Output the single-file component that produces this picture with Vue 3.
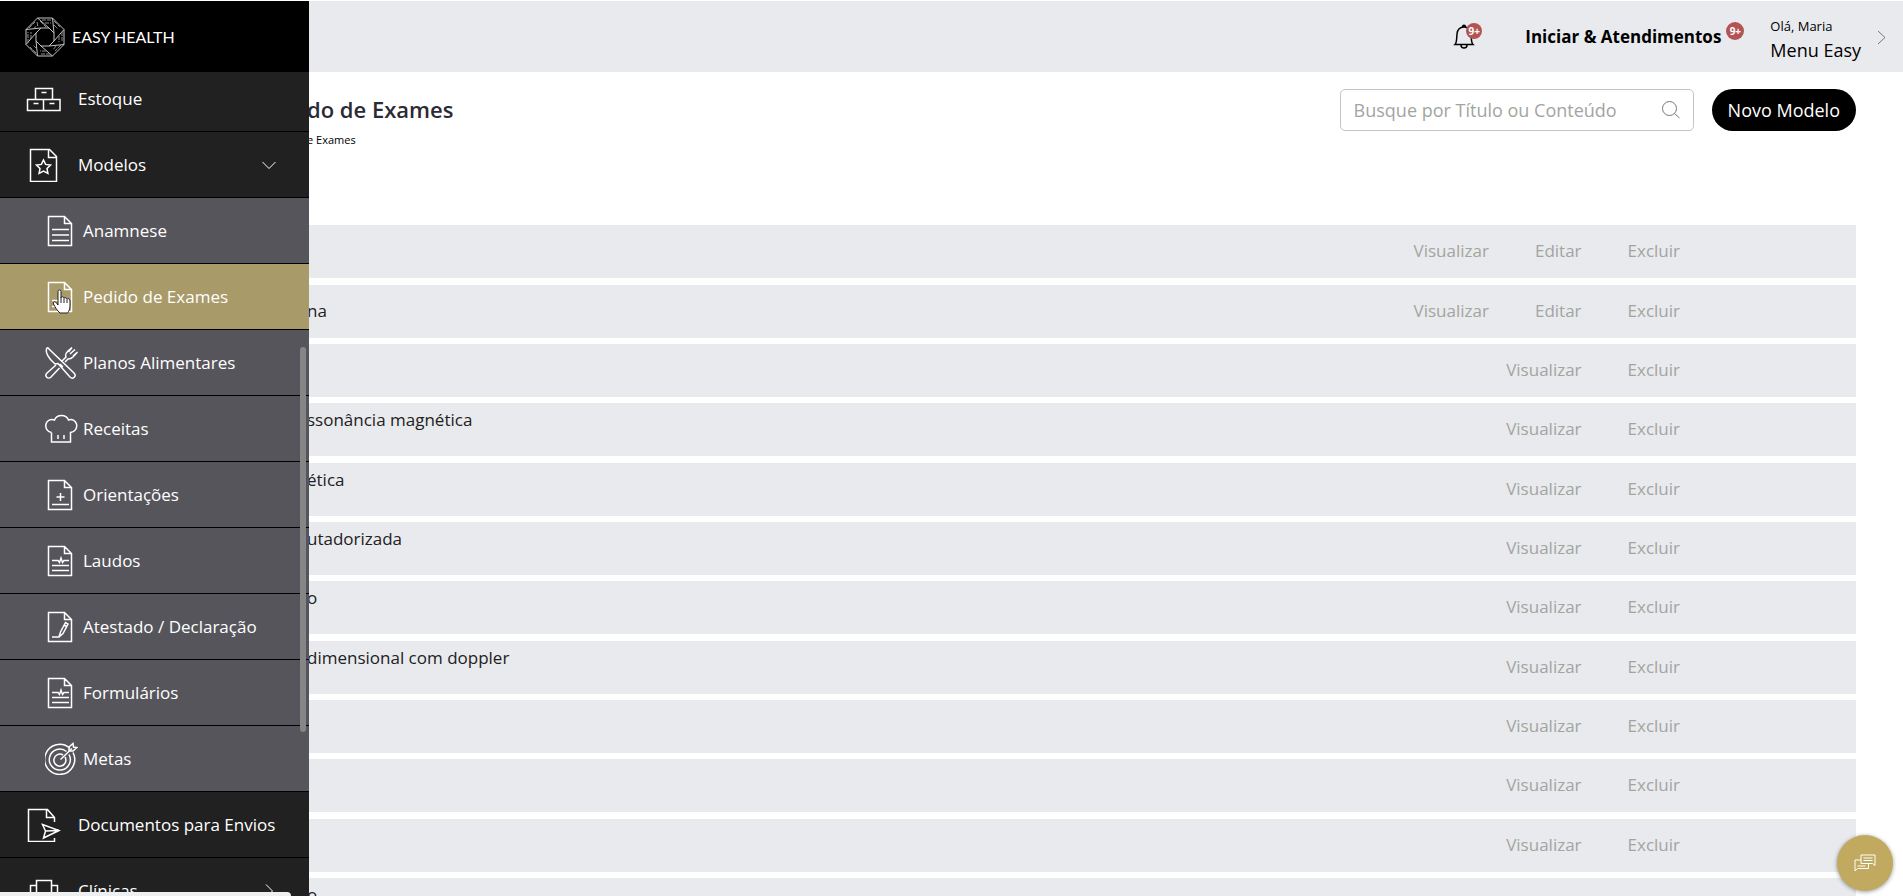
<script setup>
import { ref } from 'vue'

const busca = ref('')

// contorno da folha usado por quase todos os ícones do submenu
const folha = 'M3.5 2.5H19.5L26.5 9.5V31.5H3.5ZM19.5 2.5V9.5H26.5'

const icones = {
  estoque: 'M9.5 7.5H26.5V18.5H9.5ZM1.5 18.5H17.5V29.5H1.5ZM17.5 18.5H34V29.5H17.5ZM15.5 11.5H20.5M7.5 22.5H12.5M23.5 22.5H28.5',
  modelos:
    'M4.5 2.5H23.5L30.5 9.5V34.5H4.5ZM22.5 2.5V10.5H30.5M17.5 13L19.6 17.4L24.5 18L21 21.4L21.9 26.4L17.5 24L13.1 26.4L14 21.4L10.5 18L15.4 17.4Z',
  anamnese: folha + 'M7 15.5H24M7 21H24M7 26.5H24',
  pedido: folha + 'M7 20.5H24M7 26.5H24',
  planos:
    'M2 2C-0.500 6 4 13 10 18L13 17.500L25 31C28 34 32 30 29 27L4 3C3.500 2 2.500 1.500 2 2ZM11 19L2 27C-1 30 3 34 6 31L14.500 22M18 21L15 18M17 15L21 11C20 9 21 7 23 5L27 1.500M25 8L30 3.500M28 10L32.500 6M32.500 6L28 11C26 13 24 13 23 13L20 16M27 1.500L23.500 6',
  receitas:
    'M6.500 20.500V30H25.500V20.500C30 20 32.500 16 31.500 12C30.500 8.500 27 6.500 23.500 8C21 2 12 2 9.500 8C5.500 6.500 2 8.500 1 12C0 16 2.500 20 6.500 20.500M13 23V27M19 23V27',
  orientacoes: folha + 'M15.5 15V23M11.5 19H19.5M7 26.5H24',
  laudos: folha + 'M7 16.5H13L14.5 18.5L16 14L17.5 18.5L19 16.5H24M7 21.5H24M7 26.5H24',
  atestado: folha + 'M7 27H14L15.5 22L20.5 12.5L23 14L18 23.5L14 27M19 15L21.5 16.5',
  metas:
    'M25 6.500A15 15 0 1 0 28 10.500M21.500 9.500A10.500 10.500 0 1 0 24 12.500M18 13A6 6 0 1 0 20 15M15.500 17.500L27 6.500M24 9V5L28 1.500L28.500 5L32 5.500L28 9Z',
  documentos: 'M28.500 15V10.500L21.500 2.500H2.500V34.500H28.500V31M20.500 2.500V10.500H28.500M16.500 17.500L33 23.500L17.500 31L19.500 24ZM19.500 24L33 23.500',
  clinicas: 'M10.5 34V7.5H25.5V34M10.5 12.5H4.5V34M25.5 12.5H31.5V34',
}

const menu = [
  { nome: 'Estoque', icone: 'estoque' },
  { nome: 'Modelos', icone: 'modelos', seta: 'baixo' },
  { nome: 'Anamnese', icone: 'anamnese', sub: true },
  { nome: 'Pedido de Exames', icone: 'pedido', sub: true, ativo: true },
  { nome: 'Planos Alimentares', icone: 'planos', sub: true },
  { nome: 'Receitas', icone: 'receitas', sub: true },
  { nome: 'Orientações', icone: 'orientacoes', sub: true },
  { nome: 'Laudos', icone: 'laudos', sub: true },
  { nome: 'Atestado / Declaração', icone: 'atestado', sub: true },
  { nome: 'Formulários', icone: 'laudos', sub: true },
  { nome: 'Metas', icone: 'metas', sub: true },
  { nome: 'Documentos para Envios', icone: 'documentos' },
  { nome: 'Clínicas', icone: 'clinicas', seta: 'direita' },
]

const modelos = [
  { id: 1, nome: '', editavel: true },
  { id: 2, nome: 'na', editavel: true },
  { id: 3, nome: '' },
  { id: 4, nome: 'ssonância magnética', longo: true },
  { id: 5, nome: 'ética', longo: true },
  { id: 6, nome: 'utadorizada', longo: true },
  { id: 7, nome: 'o', longo: true },
  { id: 8, nome: 'dimensional com doppler', longo: true },
  { id: 9, nome: '' },
  { id: 10, nome: '' },
  { id: 11, nome: '' },
  { id: 12, nome: 'o', longo: true },
]
</script>

<template>
  <div class="app">
    <header class="topo">
      <button class="sino" type="button" aria-label="Notificações">
        <svg width="22" height="26" viewBox="0 0 22 26">
          <path d="M2 20.500H20C18 18.500 18.500 14 18 10C17.500 5.500 15 3 11 3C7 3 4.500 5.500 4 10C3.500 14 4 18.500 2 20.500ZM9.500 3C9.500 0.500 12.500 0.500 12.500 3M8 21C8 25 14 25 14 21" />
        </svg>
        <span class="contador">9+</span>
      </button>
      <a class="atendimentos" href="#">Iniciar &amp; Atendimentos</a>
      <span class="contador maior">9+</span>
      <button class="usuario" type="button">
        <span class="textos">
          <span class="ola">Olá, Maria</span>
          <span class="menu-easy">Menu Easy</span>
        </span>
        <svg width="10" height="16" viewBox="0 0 10 16"><path d="M1 2L8 8.500L1 15" /></svg>
      </button>
    </header>

    <main class="conteudo">
      <div class="cabecalho">
        <div class="titulos">
          <h1>do de Exames</h1>
          <p>e Exames</p>
        </div>
        <label class="busca">
          <input v-model="busca" type="text" placeholder="Busque por Título ou Conteúdo" aria-label="Busca" />
          <svg width="20" height="20" viewBox="0 0 20 20"><circle cx="8.500" cy="8.500" r="7" /><path d="M13.500 13.500L18.500 18" /></svg>
        </label>
        <button class="novo" type="button">Novo Modelo</button>
      </div>

      <ul class="lista">
        <li v-for="modelo in modelos" :key="modelo.id" :class="{ longo: modelo.longo }">
          <span class="nome">{{ modelo.nome }}</span>
          <div class="acoes">
            <button type="button">Visualizar</button>
            <button v-if="modelo.editavel" type="button">Editar</button>
            <button type="button">Excluir</button>
          </div>
        </li>
      </ul>
    </main>

    <aside class="lateral">
      <div class="marca">
        <svg class="logo" width="40" height="40" viewBox="0 0 40 40">
          <path d="M12.500 1H27.500L39 12.500V27.500L27.500 39H12.500L1 27.500V12.500Z" />
          <path d="M16 11H24L29 16V24L24 29H16L11 24V16Z" />
          <path d="M12.500 1L24 11M27.500 1L29 16M39 12.500L29 24M39 27.500L24 29M27.500 39L16 29M12.500 39L11 24M1 27.500L11 16M1 12.500L16 11" />
          <path class="trama" d="M17 3H26M20 6H26M29 4L35 10M29 8L33 12M37 15V25M34 19V25M36 28L30 34M31 29L28 33M25 37H15M21 34H15M11 36L5 30M12 32L8 28M3 26V15M6 22V15M4 11L10 5M8 12L13 8M15 4L21 10M12 5L13 10" />
        </svg>
        <span>EASY HEALTH</span>
      </div>
      <nav>
        <ul>
          <li v-for="item in menu" :key="item.nome">
            <a href="#" :class="{ sub: item.sub, ativo: item.ativo }">
              <svg class="icone" :viewBox="item.sub ? '0 0 33 33' : '0 0 35 35'"><path :d="icones[item.icone]" /></svg>
              <span>{{ item.nome }}</span>
              <svg v-if="item.seta" class="seta" :class="item.seta" viewBox="0 0 14 14"><path d="M0.500 4L7 10.500L13.500 4" /></svg>
            </a>
          </li>
        </ul>
      </nav>
      <div class="rolagem"></div>
    </aside>

    <button class="chat" type="button" aria-label="Chat">
      <svg width="22" height="18" viewBox="0 0 22 18">
        <path d="M7 1H21V11.500L18.500 9.500H7ZM9.500 4H18.500M9.500 6.500H18.500M7 6H1V17L3.500 14.500H14.500V9.500M3.500 12H11.500" />
      </svg>
    </button>

    <div class="barra-status"></div>

    <svg class="cursor" width="20" height="26" viewBox="0 0 20 26">
      <path d="M6 2.500C6 0.500 9 0.500 9 2.500V9C9 7 12 7.500 12 9.500C12 8 15 8.500 15 10.500C15.500 9 18 9.500 18 12V17C18 20 17 22 15.500 24H8C5 21.500 3 18 1.500 15C0.500 12.500 3 12 4.500 14L6 16Z" />
      <path d="M9 9V14M12 10V14M15 11V14" />
    </svg>
  </div>
</template>

<style>
body {
  margin: 0;
  background-color: #fff;
  overflow: hidden;
}
</style>

<style scoped>
.app {
  position: relative;
  height: 100vh;
  overflow: hidden;
  padding-top: 1px;
  box-sizing: border-box;
  font-family: 'Open Sans', 'Noto Sans', sans-serif;
  font-size: 18px;
  color: #212121;
}
svg {
  fill: none;
  stroke: currentColor;
  stroke-width: 1.5;
  flex-shrink: 0;
}
button {
  font: inherit;
  color: inherit;
  border: none;
  background: none;
  padding: 0;
  cursor: pointer;
}
ul {
  list-style: none;
  margin: 0;
  padding: 0;
}
a {
  color: inherit;
  text-decoration: none;
}

.topo {
  display: flex;
  align-items: center;
  justify-content: flex-end;
  height: 71px;
  padding-right: 16px;
  background-color: #e9eaee;
  color: #000;
}
.sino {
  position: relative;
  height: 26px;
  margin-right: 50px;
}
.contador {
  display: block;
  width: 16px;
  height: 16px;
  border-radius: 50%;
  background-color: #b35454;
  color: #fff;
  font-size: 10px;
  font-weight: 700;
  line-height: 16px;
  text-align: center;
}
.sino .contador {
  position: absolute;
  top: -1px;
  right: -7px;
}
.contador.maior {
  width: 18px;
  height: 18px;
  line-height: 18px;
  margin: 0 26px 12px 5px;
}
.atendimentos {
  font-size: 17px;
  font-weight: 700;
}
.usuario {
  display: flex;
  align-items: center;
  gap: 16px;
  text-align: left;
}
.usuario svg {
  stroke: #777;
  stroke-width: 1;
}
.textos {
  display: flex;
  flex-direction: column;
  padding-top: 4px;
}
.ola {
  font-size: 13px;
  line-height: 22px;
}
.menu-easy {
  font-weight: 500;
  line-height: 26px;
}

.conteudo {
  padding: 17px 47px 0 307px;
}
.cabecalho {
  display: flex;
  align-items: flex-start;
  height: 136px;
}
.titulos {
  flex: 1;
}
h1 {
  margin: 0;
  font-size: 22px;
  font-weight: 600;
  line-height: 40px;
  color: #2b2b33;
}
p {
  margin: 0;
  font-size: 11px;
  line-height: 22px;
  color: #000;
}
.busca {
  display: flex;
  align-items: center;
  width: 354px;
  height: 42px;
  box-sizing: border-box;
  margin-right: 18px;
  padding: 0 12px 0 13px;
  border: 1px solid #c4c4c4;
  border-radius: 5px;
}
.busca input {
  flex: 1;
  min-width: 0;
  padding: 0;
  border: none;
  outline: none;
  background: none;
  font: inherit;
}
.busca input::placeholder {
  color: #a2a59f;
}
.busca svg {
  stroke: #777;
  stroke-width: 1;
}
.novo {
  height: 42px;
  padding: 0 16px;
  border-radius: 21px;
  background-color: #000;
  color: #fff;
}

.lista {
  font-size: 17px;
}
.lista li {
  display: flex;
  align-items: center;
  justify-content: space-between;
  height: 53px;
  margin-bottom: 6px;
  padding: 0 176px 2px 0;
  box-sizing: border-box;
  background-color: #e9eaee;
}
.lista li:nth-child(3n + 1) {
  margin-bottom: 7px;
}
.nome {
  line-height: 24px;
}
.longo .nome {
  align-self: flex-start;
  margin-top: 5px;
}
.acoes {
  display: flex;
  gap: 46px;
  color: #a2a59f;
}

.lateral {
  position: absolute;
  top: 1px;
  left: 0;
  bottom: 0;
  width: 309px;
  overflow: hidden;
  background-color: #212121;
  color: #fff;
}
.marca {
  position: relative;
  z-index: 1;
  display: flex;
  align-items: center;
  gap: 7px;
  height: 71px;
  padding-left: 25px;
  background-color: #000;
  font-family: Lato, sans-serif;
  font-size: 16px;
}
.logo {
  stroke: #c4c4c4;
  stroke-width: 1;
}
.logo .trama {
  stroke: #8c8c8c;
  stroke-dasharray: 4 1;
}
/* a lista já está rolada: o primeiro item passa por baixo da marca */
nav {
  margin-top: -6px;
  font-size: 17px;
  white-space: nowrap;
}
nav a {
  display: flex;
  align-items: center;
  gap: 17px;
  height: 65px;
  padding: 0 33px 0 26px;
  border-bottom: 1px solid #000;
}
nav a.sub {
  gap: 5px;
  padding-left: 45px;
  background-color: #56555b;
}
nav a.ativo {
  background-color: #a99a69;
}
.icone {
  width: 35px;
  height: 35px;
}
.sub .icone {
  width: 33px;
  height: 33px;
}
.seta {
  width: 14px;
  height: 14px;
  margin-left: auto;
  stroke-width: 1;
}
.seta.direita {
  transform: rotate(-90deg);
}
.rolagem {
  position: absolute;
  top: 346px;
  right: 3px;
  width: 6px;
  height: 385px;
  border-radius: 3px;
  background-color: #868686;
}

.chat {
  position: absolute;
  right: 10px;
  bottom: 5px;
  display: flex;
  align-items: center;
  justify-content: center;
  width: 56px;
  height: 56px;
  border-radius: 50%;
  background-color: #c1a95f;
  box-shadow: 0 1px 4px rgba(0, 0, 0, 0.4);
  color: #fff;
}
.chat svg {
  stroke-width: 1;
}
.barra-status {
  position: absolute;
  left: 0;
  bottom: 0;
  width: 291px;
  height: 4px;
  border-top-right-radius: 4px;
  background-color: #eeeff1;
}
.cursor {
  position: absolute;
  top: 289px;
  left: 52px;
  fill: #fff;
  stroke: #222;
  stroke-width: 1;
}
</style>
